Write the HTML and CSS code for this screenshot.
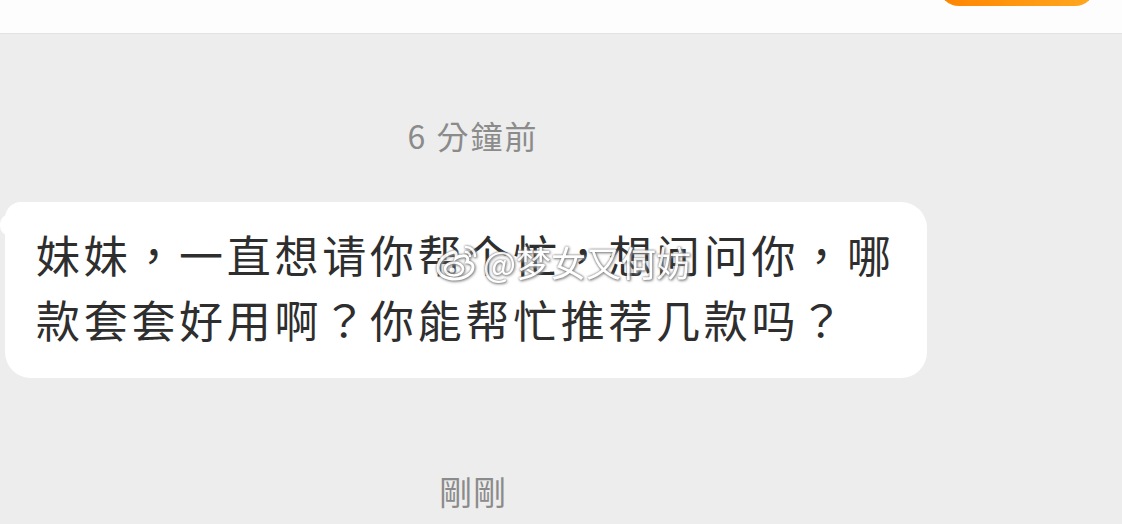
FILE: index.html
```html
<!DOCTYPE html>
<html lang="zh-TW">
<head>
    <meta charset="UTF-8">
    <title>聊天</title>
    <link rel="stylesheet" href="styles.css">
</head>
<body>
<div class="top">
    <span class="btn"></span>
</div>
<div class="chat">
    <div class="time">6 分鐘前</div>
    <div class="bubble">
        <p class="msg" lang="zh-TW">妹妹，一直想请你帮个忙，想问问你，哪<br>款套套好用啊？你能帮忙推荐几款吗？</p>
        <div class="mark">
            <svg width="46" height="40" viewBox="0 0 46 40">
                <path d="M19 10c-9 2-16 9-16 16 0 7 8 11 17 11 10 0 18-6 18-12 0-4-4-5-6-5 2-4 0-7-5-6-3 0-6 2-6 2 1-4-1-7-2-6z" fill="none" stroke="#fff" stroke-width="3"/>
                <ellipse cx="19" cy="27" rx="9" ry="6.5" fill="none" stroke="#fff" stroke-width="2.6"/>
                <circle cx="17" cy="28" r="2.6" fill="#fff"/>
                <path d="M31 5c5 0 9 4 9 9" fill="none" stroke="#fff" stroke-width="2.6" stroke-linecap="round"/>
                <path d="M31 10c2 0 4 2 4 4" fill="none" stroke="#fff" stroke-width="2.4" stroke-linecap="round"/>
            </svg>
            <span lang="zh-CN">@梦女又何妨</span>
        </div>
    </div>
    <div class="time now">剛剛</div>
</div>
</body>
</html>
```
FILE: styles.css
```css
*{
    margin: 0;
    padding: 0;
    box-sizing: border-box;
}
body{
    width: 1122px;
    height: 524px;
    overflow: hidden;
    background: #ededed;
    font-family: "Noto Sans CJK TC", "Noto Sans", sans-serif;
}
.top{
    height: 34px;
    background: #fdfdfd;
    border-bottom: 1px solid #e2e2e2;
    display: flex;
    justify-content: flex-end;
    padding-right: 27px;
}
.btn{
    width: 156px;
    height: 40px;
    margin-top: -34px;
    border-radius: 20px;
    background: linear-gradient(90deg, #ff8400, #ffa820);
}
.chat{
    width: 946px;
    display: flex;
    flex-direction: column;
}
.time{
    margin-top: 81px;
    height: 40px;
    line-height: 40px;
    text-align: center;
    font-size: 32px;
    letter-spacing: 2px;
    color: #8b8b8b;
}
.time.now{
    margin-top: 93px;
    font-size: 33px;
    letter-spacing: 1px;
}
.bubble{
    position: relative;
    margin: 47px 0 0 5px;
    width: 922px;
    height: 176px;
    background: #fff;
    border-radius: 16px 26px 26px 26px;
    padding: 20px 0 0 31px;
}
.bubble::before{
    content: "";
    position: absolute;
    left: -5px;
    top: 12px;
    width: 12px;
    height: 22px;
    background: #fff;
    border-radius: 10px 0 0 10px;
}
.msg{
    font-family: "Noto Sans CJK TC", sans-serif;
    font-size: 44px;
    line-height: 65px;
    letter-spacing: 3.7px;
    color: #2e2e2e;
    white-space: nowrap;
}
.mark{
    position: absolute;
    left: 430px;
    top: 40px;
    display: flex;
    align-items: center;
    gap: 2px;
    opacity: 0.92;
    filter: drop-shadow(0 0 1px #666) drop-shadow(1px 1px 1px #999);
}
.mark span{
    font-family: "Noto Sans CJK SC", sans-serif;
    font-size: 35px;
    line-height: 40px;
    color: #fff;
}
```
